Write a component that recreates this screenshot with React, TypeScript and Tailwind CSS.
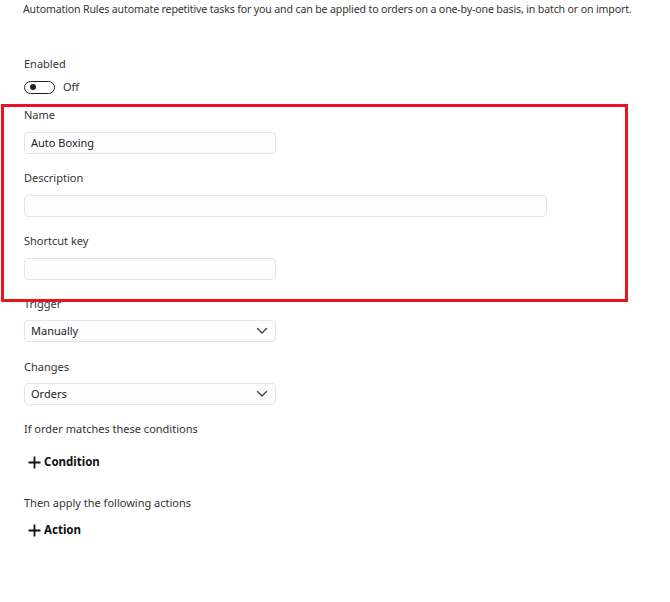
import React from "react";

const font = { fontFamily: '"Segoe UI", "Noto Sans", "Open Sans", sans-serif' };

function Field({ label, value, wide }: { label: string; value?: string; wide?: boolean }) {
  return (
    <div className="flex flex-col">
      <div className="h-4 leading-4 text-[11px] text-[#333]">{label}</div>
      <div
        className={`mt-[9px] h-[22px] ${wide ? "w-[523px]" : "w-[252px]"} rounded-[4px] border border-[#e2e6eb] bg-[#fdfdfd] px-[6px] flex items-center text-[11px] text-[#222]`}
      >
        {value}
      </div>
    </div>
  );
}

function Select({ label, value }: { label: string; value: string }) {
  return (
    <div className="flex flex-col">
      <div className="h-4 leading-4 text-[11px] text-[#333]">{label}</div>
      <div className="mt-[8px] h-[22px] w-[252px] rounded-[4px] border border-[#e2e6eb] bg-[#fdfdfd] pl-[6px] pr-[7px] flex items-center justify-between text-[11px] text-[#222]">
        <span>{value}</span>
        <svg width="12" height="8" viewBox="0 0 12 8" fill="none">
          <path d="M1.5 1.5 L6 6 L10.5 1.5" stroke="#444" strokeWidth="1.4" strokeLinecap="round" strokeLinejoin="round" />
        </svg>
      </div>
    </div>
  );
}

function AddButton({ label }: { label: string }) {
  return (
    <div className="flex items-center pl-[4px] h-4 text-[11.5px] font-bold text-[#111]">
      <svg width="13" height="13" viewBox="0 0 13 13" className="mr-[3px]">
        <path d="M6.5 0.5 V12.5 M0.5 6.5 H12.5" stroke="#111" strokeWidth="1.8" />
      </svg>
      {label}
    </div>
  );
}

export default function App() {
  return (
    <div className="relative w-[670px] h-[602px] bg-white" style={font}>
      <div className="pl-[23px] pt-[1px] flex flex-col">
        <div className="h-4 leading-4 text-[10.6px] text-[#333] tracking-[-0.15px] whitespace-nowrap">
          Automation Rules automate repetitive tasks for you and can be applied to orders on a one-by-one basis, in batch or on import.
        </div>
        <div className="pl-[1px] mt-[39px] flex flex-col">
          <div className="h-4 leading-4 text-[11px] text-[#333]">Enabled</div>
          <div className="mt-[9px] flex items-center h-[12px]">
            <div className="w-[31px] h-[13px] rounded-full border-[1.5px] border-[#222] flex items-center pl-[5px]">
              <div className="w-[6px] h-[6px] rounded-full bg-[#222]" />
            </div>
            <span className="ml-[8px] text-[11px] text-[#333]">Off</span>
          </div>
          <div className="mt-[14px] flex flex-col gap-[16px]">
            <Field label="Name" value="Auto Boxing" />
            <Field label="Description" wide />
            <Field label="Shortcut key" />
          </div>
          <div className="mt-[16px] flex flex-col gap-[17px]">
            <Select label="Trigger" value="Manually" />
            <Select label="Changes" value="Orders" />
          </div>
          <div className="mt-[16px] h-4 leading-4 text-[11px] text-[#333]">If order matches these conditions</div>
          <div className="mt-[17px]">
            <AddButton label="Condition" />
          </div>
          <div className="mt-[25px] h-4 leading-4 text-[11px] text-[#333]">Then apply the following actions</div>
          <div className="mt-[11px]">
            <AddButton label="Action" />
          </div>
        </div>
      </div>
      <div className="absolute left-[1px] top-[104px] w-[627px] h-[198px] border-[3px] border-[#e5161f] pointer-events-none" />
    </div>
  );
}
